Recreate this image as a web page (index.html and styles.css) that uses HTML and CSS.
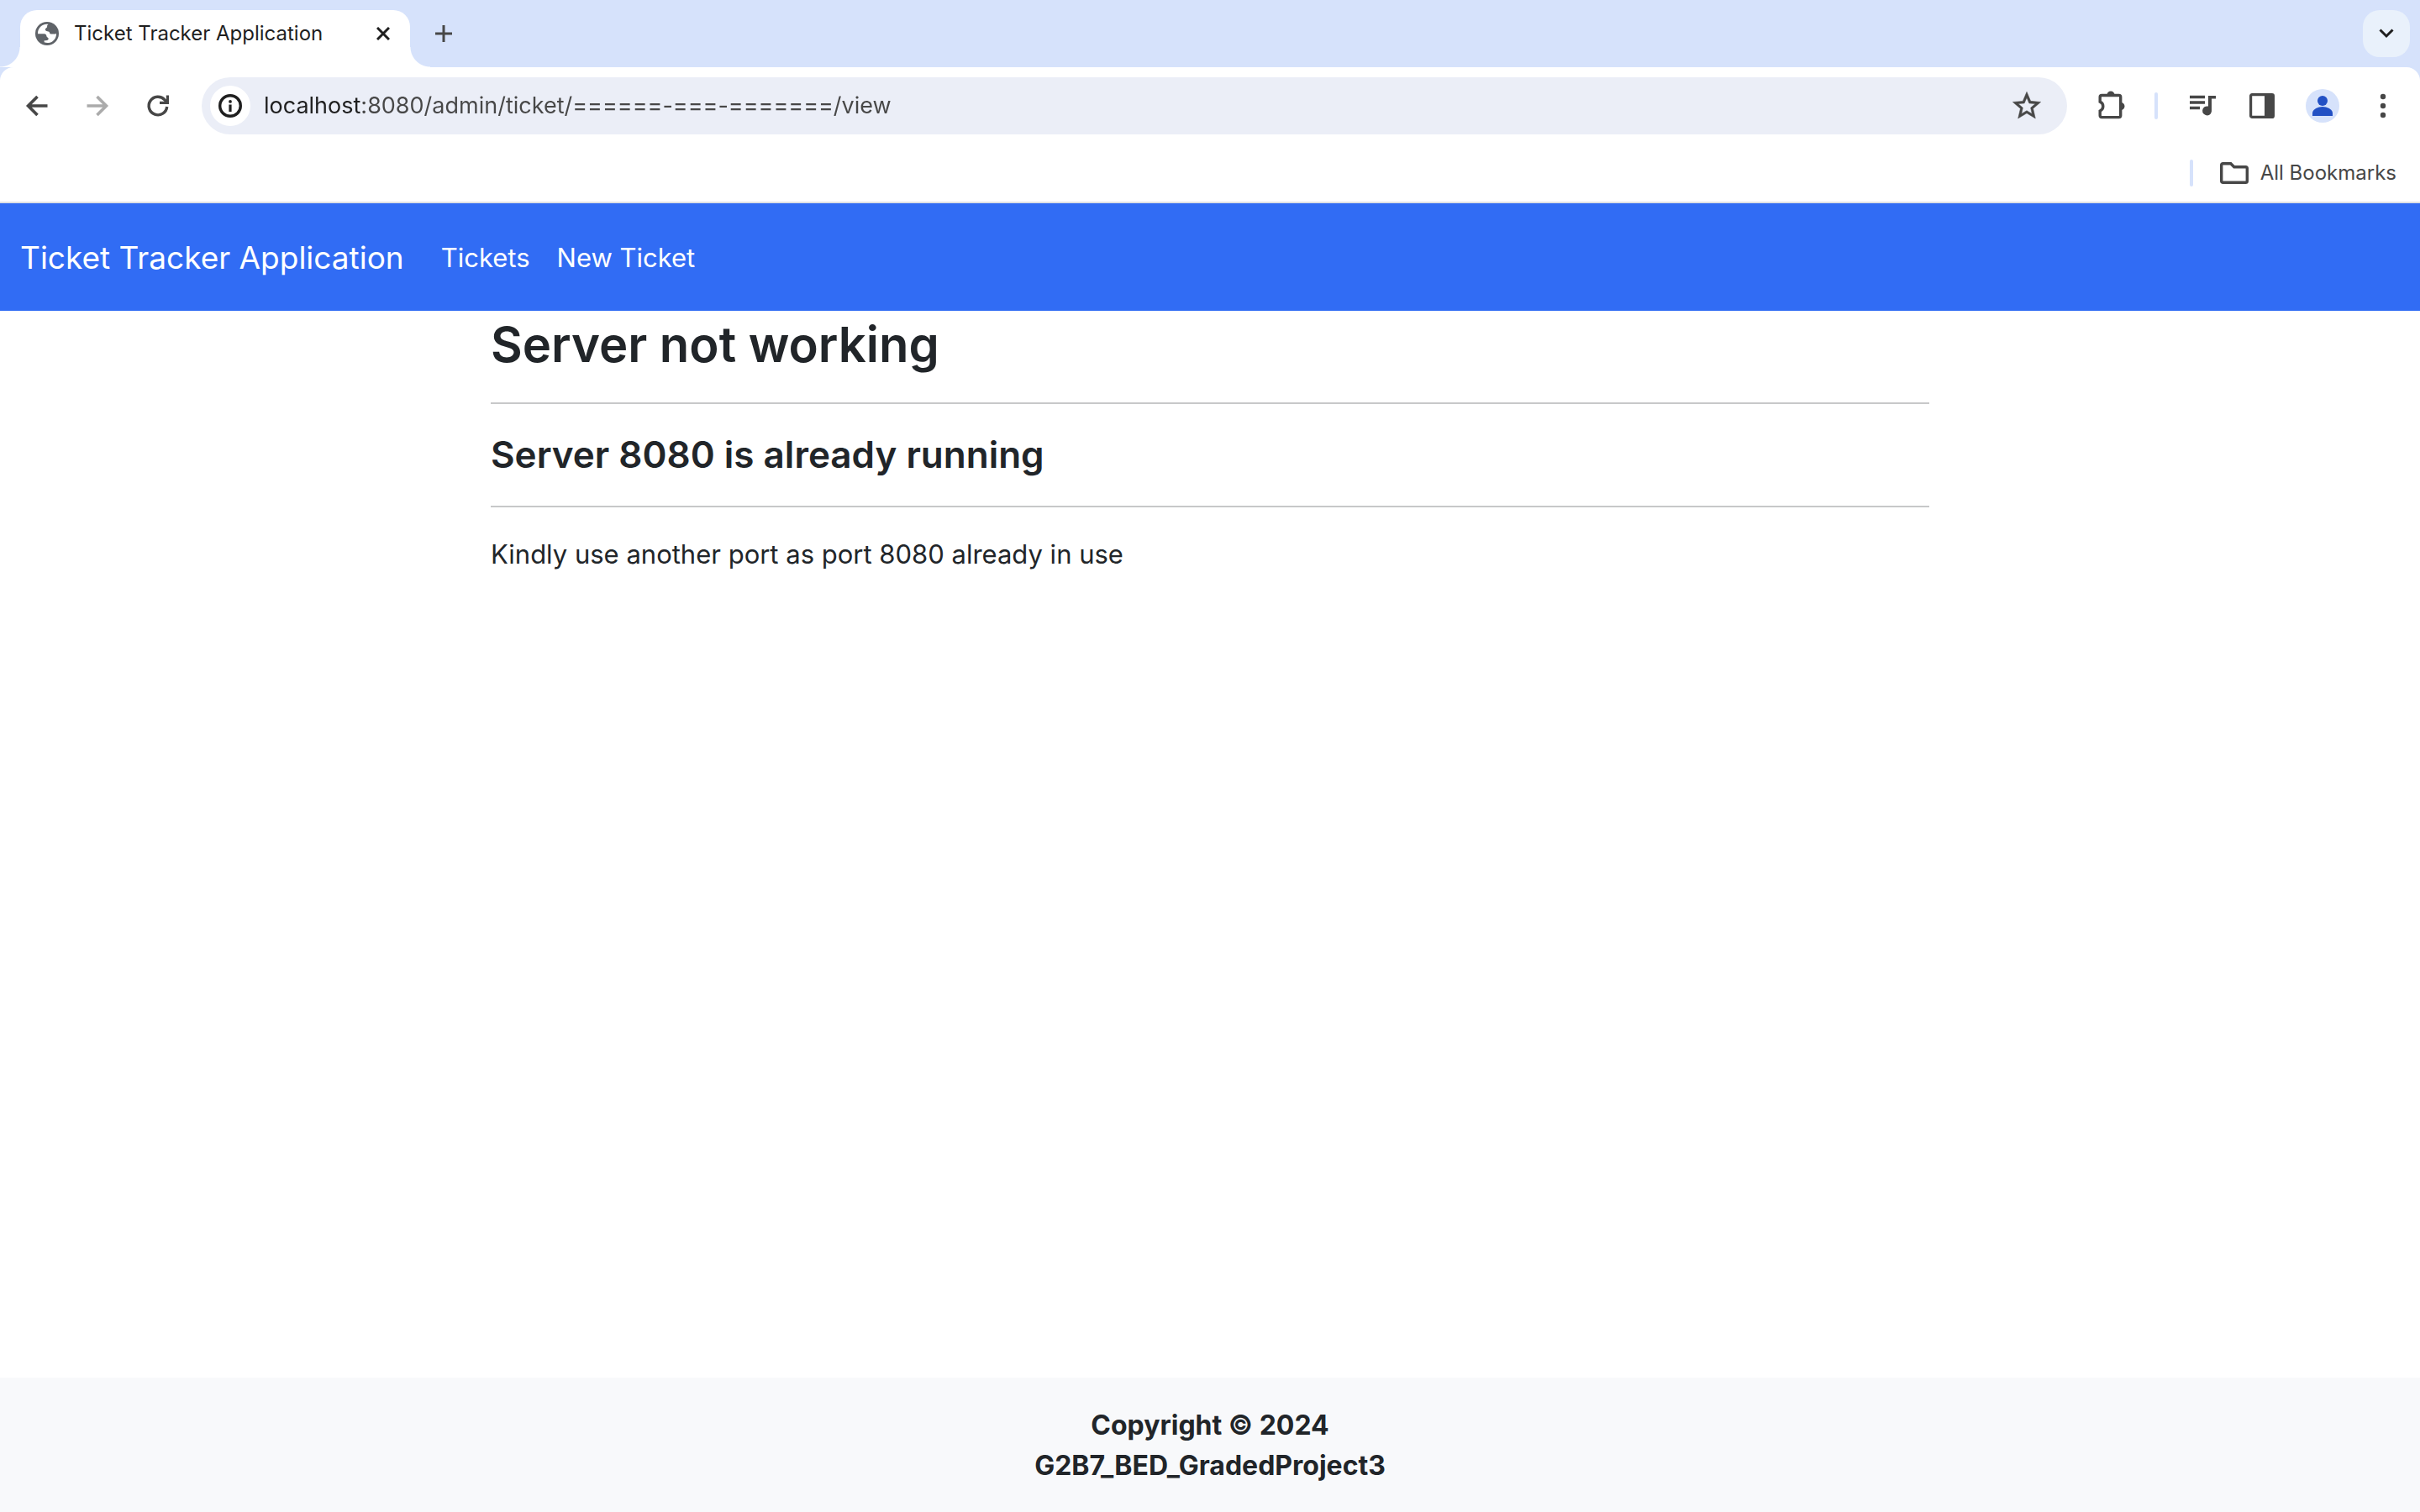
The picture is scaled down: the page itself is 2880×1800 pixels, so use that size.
FILE: index.html
```html
<!DOCTYPE html>
<html lang="en">
<head>
  <meta charset="utf-8">
  <meta name="viewport" content="width=device-width, initial-scale=1">
  <title>Ticket Tracker Application</title>
  <link rel="stylesheet" href="styles.css">
</head>
<body>
  <div class="browser">
    <div class="tab-strip">
      <div class="tab">
        <svg class="tab-favicon" viewBox="0 0 28 28" aria-hidden="true">
          <circle cx="14" cy="14" r="14" fill="#5f6368"/>
          <path fill="#fff" d="M15.600 2.900c-1.200.4-1.600 1.300-1.500 2.600.1.900-.5 1.500-1.200 1.900-.9.500-1.200 1-.9 2.200.3 1 1.100 1.600 2.300 1.700 1.600.1 2.500.6 2.800 2 .2 1.100 1.200 1.400 2.600 1.300h3.100c.8 0 1.500-.3 2.200-.9.300 3.800-1.500 7.600-4.800 9.700-2.900 1.900-6.700 2.200-9.600.9l.1-2.100c2 .1 3.800-.1 4.600-1 .7-.8.500-1.700-.5-2.400-.9-.6-1.400-1-1.500-2.200-.1-1.500-1-2.400-2.600-2.400H3.100C2.700 9.800 5.300 5.600 9.200 3.700c2-.9 4.300-1.300 6.400-.8z"/>
        </svg>
        <span class="tab-title">Ticket Tracker Application</span>
        <button class="tab-close" type="button" aria-label="Close tab">
          <svg width="16" height="16" viewBox="0 0 16 16"><path d="M1 1l14 14M15 1L1 15" fill="none" stroke="#1f1f1f" stroke-width="3"/></svg>
        </button>
      </div>
      <button class="new-tab" type="button" aria-label="New tab">
        <svg width="20" height="20" viewBox="0 0 20 20"><path d="M10 0v20M0 10h20" fill="none" stroke="#474747" stroke-width="3"/></svg>
      </button>
      <button class="tab-search" type="button" aria-label="Search tabs">
        <svg width="18" height="12" viewBox="0 0 18 12"><path d="M1.500 1.500L9 9l7.500-7.500" fill="none" stroke="#1f1f1f" stroke-width="3"/></svg>
      </button>
    </div>

    <div class="toolbar">
      <button class="tool" type="button" aria-label="Back">
        <svg width="32" height="32" viewBox="0 0 32 32"><path d="M28.500 16H6M16.500 5L5.500 16l11 11" fill="none" stroke="#474747" stroke-width="3.600"/></svg>
      </button>
      <button class="tool" type="button" aria-label="Forward" disabled>
        <svg width="32" height="32" viewBox="0 0 32 32"><path d="M3.500 16h22M15.500 5l11 11-11 11" fill="none" stroke="#ababab" stroke-width="3.600"/></svg>
      </button>
      <button class="tool" type="button" aria-label="Reload">
        <svg width="32" height="32" viewBox="0 0 32 32"><path d="M26.700 17A10.800 10.800 0 1 1 24 8.800l3 3.200" fill="none" stroke="#474747" stroke-width="3.400"/><path d="M29 3.500V14H18v-3.200h7.800V3.500z" fill="#474747"/></svg>
      </button>
      <form class="omnibox">
        <button class="site-info" type="button" aria-label="View site information">
          <svg width="28" height="28" viewBox="0 0 28 28"><circle cx="14" cy="14" r="12.300" fill="none" stroke="#1f1f1f" stroke-width="3.400"/><path d="M12.400 12.500h3.200V21h-3.200z" fill="#1f1f1f"/><circle cx="14" cy="8.900" r="1.900" fill="#1f1f1f"/></svg>
        </button>
        <input class="address" type="text" aria-label="Address" value="localhost:8080/admin/ticket/======-===-=======/view">
        <button class="bookmark" type="button" aria-label="Bookmark this tab">
          <svg width="40" height="40" viewBox="0 0 24 24"><path fill="#474747" stroke="#474747" stroke-width=".3" d="M22 9.240l-7.190-.62L12 2 9.190 8.630 2 9.240l5.460 4.730L5.820 21 12 17.270 18.180 21l-1.630-7.030L22 9.240zM12 15.400l-3.760 2.270 1-4.280-3.320-2.880 4.380-.38L12 6.100l1.710 4.040 4.380.38-3.320 2.880 1 4.280L12 15.400z"/></svg>
        </button>
      </form>
      <button class="tool extensions" type="button" aria-label="Extensions">
        <svg width="40" height="40" viewBox="0 0 40 40"><path d="M5.200 9.500q0-2 2-2h20.500q2 0 2 2v22.100q0 2-2 2H7.200q-2 0-2-2v-5.500a6 6 0 0 0 0-11z" fill="none" stroke="#474747" stroke-width="3.400"/><path d="M13.500 7a4.500 4.500 0 0 1 9 0zM30 16a4.500 4.500 0 0 1 0 9z" fill="#474747"/></svg>
      </button>
      <span class="divider"></span>
      <button class="tool" type="button" aria-label="Media controls">
        <svg width="36" height="32" viewBox="0 0 36 32"><path d="M4 5.500h18M4 12h18M4 18.500h12" fill="none" stroke="#474747" stroke-width="3.400"/><path d="M26 4h9v3.500h-5V21a5.500 5.500 0 1 1-4-4.400z" fill="#474747"/></svg>
      </button>
      <button class="tool" type="button" aria-label="Side panel">
        <svg width="30" height="30" viewBox="0 0 30 30"><rect x="1.600" y="1.600" width="26.800" height="26.800" rx="1.500" fill="none" stroke="#474747" stroke-width="3.200"/><path d="M18 2h10v26H18z" fill="#474747"/></svg>
      </button>
      <button class="tool" type="button" aria-label="Profile">
        <svg width="40" height="40" viewBox="0 0 40 40"><circle cx="20" cy="20" r="20" fill="#d6e2fb"/><circle cx="20" cy="14" r="6" fill="#2250c4"/><path d="M8 32v-3.500c0-4.500 7-7.500 12-7.500s12 3 12 7.500V32z" fill="#2250c4"/></svg>
      </button>
      <button class="tool" type="button" aria-label="Menu">
        <svg width="8" height="30" viewBox="0 0 8 30"><g fill="#474747"><circle cx="4" cy="4" r="3.200"/><circle cx="4" cy="15" r="3.200"/><circle cx="4" cy="26" r="3.200"/></g></svg>
      </button>
    </div>

    <div class="bookmarks">
      <span class="divider"></span>
      <button class="all-bookmarks" type="button">
        <svg width="34" height="26" viewBox="0 0 34 26"><path d="M1.700 22.500v-19q0-1.800 1.800-1.800h9.300l4 4h13.700q1.800 0 1.800 1.800v15q0 1.800-1.800 1.800h-27q-1.800 0-1.800-1.800z" fill="none" stroke="#474747" stroke-width="3.400"/></svg>
        All Bookmarks
      </button>
    </div>
  </div>

  <nav class="navbar">
    <a class="brand" href="#">Ticket Tracker Application</a>
    <a class="nav-link" href="#">Tickets</a>
    <a class="nav-link" href="#">New Ticket</a>
  </nav>

  <main class="content">
    <h1>Server not working</h1>
    <hr>
    <h2>Server 8080 is already running</h2>
    <hr>
    <p>Kindly use another port as port 8080 already in use</p>
  </main>

  <footer class="footer">
    <p>Copyright © 2024</p>
    <p>G2B7_BED_GradedProject3</p>
  </footer>
</body>
</html>
```

FILE: styles.css
```css
* {
  box-sizing: border-box;
}

body {
  margin: 0;
  min-height: 100vh;
  display: flex;
  flex-direction: column;
  background: #fff;
  color: #212529;
  font: 400 31px/48px Inter, "Liberation Sans", sans-serif;
}

button {
  display: flex;
  align-items: center;
  justify-content: center;
  padding: 0;
  border: 0;
  background: none;
  color: inherit;
  font: inherit;
}

svg {
  display: block;
  flex: none;
}

/* Browser window */
.browser {
  background: #d6e2fb;
  border-bottom: 2px solid #dfe1e5;
}

.tab-strip {
  display: flex;
  align-items: flex-start;
  height: 80px;
  padding: 12px 12px 0 24px;
}

.tab {
  position: relative;
  display: flex;
  align-items: center;
  width: 464px;
  height: 68px;
  padding: 0 20px 12px 18px;
  border-radius: 20px 20px 0 0;
  background: #fff;
  color: #1f1f1f;
  font-size: 24px;
  line-height: 32px;
}

/* Curved feet where the tab meets the toolbar */
.tab::before,
.tab::after {
  content: "";
  position: absolute;
  bottom: 0;
  width: 24px;
  height: 24px;
}

.tab::before {
  right: 100%;
  background: radial-gradient(circle at 0 0, transparent 23px, #fff 24px);
}

.tab::after {
  left: 100%;
  background: radial-gradient(circle at 100% 0, transparent 23px, #fff 24px);
}

.tab-favicon {
  width: 28px;
  height: 28px;
  margin-right: 18px;
}

.tab-title {
  flex: 1;
  white-space: nowrap;
}

.tab-close {
  width: 24px;
  height: 24px;
}

.new-tab {
  width: 56px;
  height: 56px;
  margin-left: 12px;
}

.tab-search {
  width: 56px;
  height: 56px;
  margin-left: auto;
  border-radius: 20px;
  background: #e9f1fb;
}

.toolbar {
  display: flex;
  align-items: center;
  padding: 12px 8px 0;
  border-radius: 16px 16px 0 0;
  background: #fff;
}

.tool {
  width: 72px;
  height: 68px;
}

.omnibox {
  flex: 1;
  display: flex;
  align-items: center;
  height: 68px;
  margin: 0 18px 0 16px;
  padding: 0 28px 0 10px;
  border-radius: 34px;
  background: #ebeef7;
}

.site-info {
  width: 48px;
  height: 48px;
  border-radius: 50%;
  background: #fff;
}

/* The host part is darker than the path after it */
.address {
  flex: 1;
  min-width: 0;
  height: 48px;
  margin: 0;
  padding: 0 0 0 16px;
  border: 0;
  outline: 0;
  background: linear-gradient(90deg, #1f1f1f 133px, #474747 133px);
  -webkit-background-clip: text;
  background-clip: text;
  color: #474747;
  -webkit-text-fill-color: transparent;
  font: inherit;
  font-size: 27px;
}

.divider {
  width: 4px;
  height: 32px;
  border-radius: 2px;
  background: #d6e2fb;
}

.toolbar .divider {
  margin: 0 16px 0 14px;
}

.bookmarks {
  display: flex;
  align-items: center;
  justify-content: flex-end;
  gap: 32px;
  height: 80px;
  padding: 12px 28px 12px;
  background: #fff;
}

.bookmarks .divider,
.all-bookmarks {
  margin-top: 12px;
}

.all-bookmarks {
  gap: 14px;
  color: #474747;
  font-size: 24px;
  line-height: 32px;
}

/* Application page */
.navbar {
  display: flex;
  align-items: center;
  height: 128px;
  padding: 2px 24px 0;
  background: #316cf4;
}

.navbar a {
  color: #fff;
  text-decoration: none;
}

.navbar .brand {
  margin-right: 28px;
  font-size: 37px;
  line-height: 60px;
}

.nav-link {
  padding: 0 16px;
}

.content {
  flex: 1;
  width: 100%;
  max-width: 1760px;
  margin: 0 auto;
  padding: 4px 24px 0;
}

h1,
h2,
p {
  margin: 0;
}

h1,
h2 {
  font-weight: 600;
}

h1 {
  font-size: 58px;
  line-height: 73px;
}

h2 {
  font-size: 44px;
  line-height: 57px;
}

hr {
  height: 2px;
  margin: 32px 0;
  border: 0;
  background: #c7c8c9;
}

.footer {
  padding: 33px 24px 31px;
  background: #f8f9fb;
  font-size: 32px;
  font-weight: 700;
  text-align: center;
}
```
